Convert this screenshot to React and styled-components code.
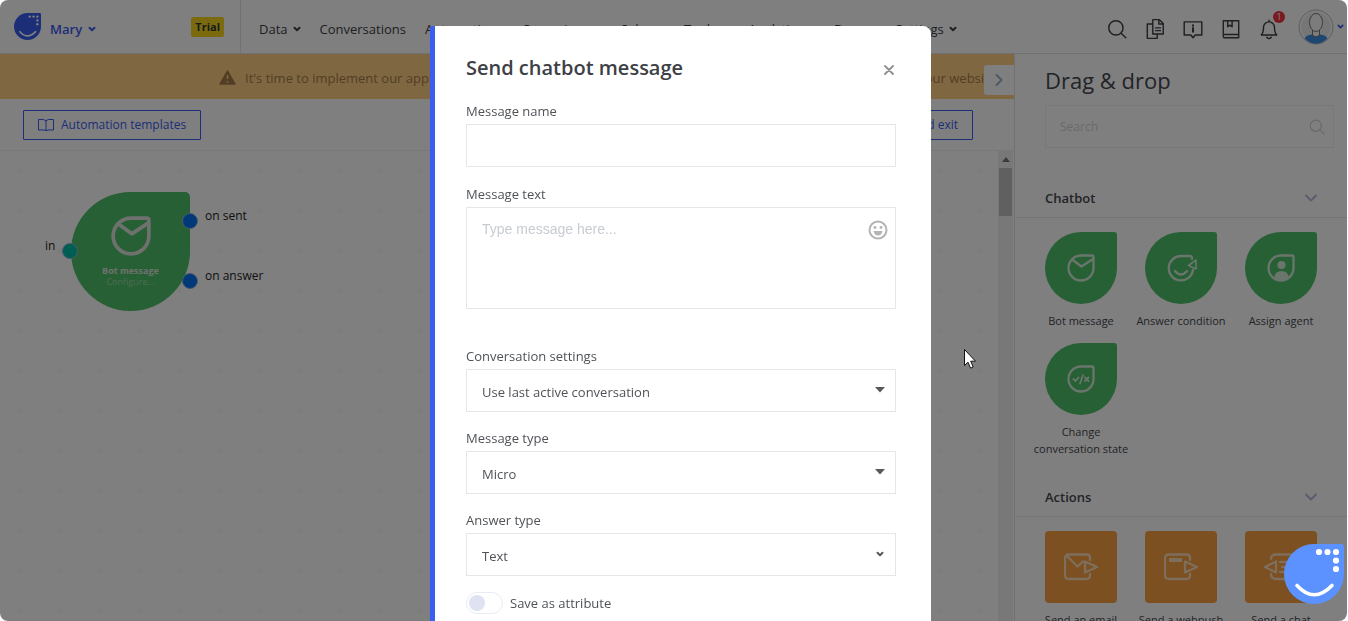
import React from "react";
import styled, { createGlobalStyle } from "styled-components";

const GlobalStyle = createGlobalStyle`
  *, *::before, *::after { box-sizing: border-box; }
  body { margin: 0; background: #fff; overflow: hidden; }
  body, button, input, select, textarea { font-family: "Open Sans", "Noto Sans", sans-serif; font-size: 13px; }
  button { cursor: pointer; }
  h1, h2, h3, p { margin: 0; }
`;

const Shell = styled.div`
  position: relative;
  display: flex;
  flex-direction: column;
  height: 100vh;
  margin-right: 1px;
  border-radius: 8px;
  overflow: hidden;
  background: #fff;
  color: #44484f;
`;

const TopBar = styled.header`
  display: flex;
  align-items: stretch;
  flex: none;
  height: 54px;
  border-bottom: 1px solid #dfe2ea;
  white-space: nowrap;
`;

const Brand = styled.div`
  display: flex;
  align-items: center;
  width: 241px;
  padding: 0 16px 0 14px;
  gap: 9px;
  border-right: 1px solid #dfe2ea;
`;

const Account = styled.button`
  display: flex;
  align-items: center;
  gap: 6px;
  margin-right: auto;
  padding: 4px 0 0;
  border: 0;
  background: none;
  color: #3a5cf0;
  font-size: 13px;
  font-weight: 600;
`;

const Trial = styled.span`
  padding: 0 4px;
  border-radius: 2px;
  background: #f7d51d;
  color: #33363c;
  font-size: 11px;
  line-height: 20px;
  font-weight: 700;
`;

const Nav = styled.nav`
  display: flex;
  align-items: center;
  flex: 1;
  min-width: 0;
  gap: 19px;
  padding: 4px 0 0 18px;
`;

const NavLink = styled.a`
  display: flex;
  align-items: center;
  gap: 5px;
  color: #3d4046;
  text-decoration: none;
`;

const Tools = styled.div`
  display: flex;
  align-items: center;
  gap: 16px;
  padding-top: 4px;
`;

const ToolButton = styled.button`
  position: relative;
  display: flex;
  padding: 0;
  border: 0;
  background: none;
  color: #3d4046;
`;

const Badge = styled.span`
  position: absolute;
  top: -7px;
  right: -5px;
  width: 12px;
  border-radius: 6px;
  background: #f23540;
  color: #fff;
  font-size: 9px;
  line-height: 12px;
  text-align: center;
`;

const Profile = styled.button`
  display: flex;
  align-items: center;
  gap: 3px;
  margin: 0 3px 0 18px;
  padding: 0;
  border: 0;
  background: none;
  color: #3a5cf0;
`;

const Body = styled.div`
  display: flex;
  flex: 1;
  min-height: 0;
`;

const Workspace = styled.main`
  position: relative;
  display: flex;
  flex-direction: column;
  flex: 1;
  min-width: 0;
`;

const Banner = styled.div`
  display: flex;
  align-items: center;
  justify-content: space-between;
  flex: none;
  height: 45px;
  padding: 2px 18px 0 219px;
  background: #ffcf85;
  color: #a57c48;
  white-space: nowrap;
`;

const BannerText = styled.span`
  display: flex;
  align-items: center;
  gap: 9px;
`;

const Collapse = styled.button`
  position: absolute;
  top: 11px;
  right: 0;
  display: grid;
  place-items: center;
  width: 30px;
  height: 30px;
  padding: 0;
  border: 0;
  border-radius: 3px 0 0 3px;
  background: #fff;
  color: #9db3c6;
`;

const Actions = styled.div`
  display: flex;
  align-items: center;
  justify-content: space-between;
  flex: none;
  height: 52px;
  padding: 0 41px 0 23px;
  border-bottom: 1px solid #f0f1f4;
`;

const OutlineButton = styled.button`
  display: flex;
  align-items: center;
  gap: 7px;
  height: 30px;
  padding: 0 14px;
  border: 1px solid #3a5cf0;
  border-radius: 1px;
  background: none;
  color: #3a5cf0;
  font-size: 12px;
`;

const Canvas = styled.div`
  position: relative;
  flex: 1;
  background-image: radial-gradient(circle, #f8f8f8 2px, transparent 3px);
  background-size: 40px 40px;
`;

const Scrollbar = styled.div`
  position: absolute;
  top: 0;
  bottom: 0;
  right: 1px;
  width: 15px;
  padding: 6px 1px;
  background: #f1f1f1;
  color: #777;
  text-align: center;
  line-height: 0;
`;

const Thumb = styled.div`
  height: 48px;
  margin-top: 6px;
  background: #c1c1c1;
`;

const Node = styled.div`
  position: absolute;
  left: 71px;
  top: 41px;
  display: flex;
  flex-direction: column;
  align-items: center;
  width: 119px;
  height: 119px;
  padding-top: 24px;
  border-radius: 60px 5px 60px 60px;
  background: #4cc068;
  color: #dfe3df;
  font-size: 9px;
  line-height: 11px;
`;

const NodeTitle = styled.strong`
  margin-top: 9px;
`;

const NodeHint = styled.span`
  color: #9cd8aa;
`;

const Port = styled.span`
  position: absolute;
  left: ${(p) => p.$x}px;
  top: ${(p) => p.$y}px;
  width: 16px;
  height: 16px;
  border: 1px solid #8fb4dc;
  border-radius: 50%;
  background: ${(p) => p.$color};
`;

const PortLabel = styled.span`
  position: absolute;
  left: ${(p) => p.$x}px;
  top: ${(p) => p.$y}px;
  color: #222;
  font-size: 12px;
  line-height: 16px;
  white-space: nowrap;
`;

const Sidebar = styled.aside`
  flex: none;
  width: 333px;
  border-left: 1px solid #dfe2ea;
  overflow: hidden;
`;

const SidebarTitle = styled.h2`
  padding: 10px 30px 0;
  font-size: 22px;
  line-height: 32px;
  font-weight: 400;
  color: #44484f;
`;

const SearchBox = styled.label`
  display: flex;
  align-items: center;
  height: 43px;
  margin: 9px 13px 0 30px;
  padding: 0 8px 0 14px;
  border: 1px solid #eef0f5;
  color: #cdd1d8;
`;

const SearchInput = styled.input`
  flex: 1;
  min-width: 0;
  padding: 0;
  border: 0;
  background: none;
  outline: 0;
  font-size: 12px;
  &::placeholder { color: #d2d5da; opacity: 1; }
`;

const SectionHead = styled.button`
  display: flex;
  align-items: center;
  justify-content: space-between;
  width: 100%;
  height: 40px;
  margin-top: ${(p) => p.$gap}px;
  padding: 0 29px 0 30px;
  border: 0;
  border-bottom: 1px solid #e6e9f3;
  background: none;
  color: #44484f;
  font-weight: 600;
  & svg { color: #b4bbdc; }
`;

const TileGrid = styled.div`
  display: grid;
  grid-template-columns: repeat(3, 100px);
  row-gap: 14px;
  padding: 14px 16px 0;
`;

const Tile = styled.div`
  display: flex;
  flex-direction: column;
  align-items: center;
  gap: 8px;
  font-size: 11px;
  line-height: 17px;
  text-align: center;
  white-space: pre-line;
`;

const TileShape = styled.div`
  display: grid;
  place-items: center;
  width: 72px;
  height: 72px;
  border-radius: ${(p) => (p.$square ? "4px" : "36px 3px 36px 36px")};
  background: ${(p) => (p.$square ? "#f8a040" : "#4cc068")};
  color: ${(p) => (p.$square ? "#fcdcb8" : "#d5ead9")};
`;

const Backdrop = styled.div`
  position: fixed;
  inset: 0 1px 0 0;
  display: flex;
  justify-content: center;
  align-items: flex-start;
  padding: 26px 0 0 14px;
  border-radius: 8px;
  background: rgba(0, 0, 0, 0.5);
  overflow: hidden;
`;

const Modal = styled.form`
  display: flex;
  flex-direction: column;
  width: 501px;
  min-height: 100vh;
  padding: 26px 35px 40px 31px;
  border-left: 5px solid #3a5ff0;
  border-radius: 3px 8px 0 0;
  background: #fff;
  color: #4f5358;
`;

const ModalHead = styled.div`
  display: flex;
  align-items: center;
  justify-content: space-between;
  margin-bottom: 17px;
`;

const ModalTitle = styled.h1`
  font-size: 20px;
  line-height: 32px;
  font-weight: 600;
  color: #3d4046;
`;

const Close = styled.button`
  display: flex;
  padding: 4px 2px 0;
  border: 0;
  background: none;
  color: #8f8f8f;
`;

const Field = styled.div`
  display: flex;
  flex-direction: column;
  gap: 3px;
  margin-bottom: ${(p) => p.$gap}px;
`;

const Label = styled.label`
  line-height: 20px;
`;

const Control = styled.div`
  position: relative;
  display: flex;
`;

const TextInput = styled.input`
  width: 100%;
  height: 43px;
  padding: 0 15px;
  border: 1px solid #e4e6e8;
  background: #fff;
`;

const TextArea = styled.textarea`
  width: 100%;
  height: 102px;
  padding: 11px 48px 11px 15px;
  border: 1px solid #e4e6e8;
  resize: none;
  font-family: "Liberation Sans", sans-serif;
  font-size: 14px;
  line-height: 20px;
  &::placeholder { color: #c6ccd2; opacity: 1; }
`;

const EmojiButton = styled.button`
  position: absolute;
  top: 13px;
  right: 8px;
  display: flex;
  padding: 0;
  border: 0;
  background: none;
  color: #b4b4b4;
`;

const Select = styled.select`
  width: 100%;
  height: 43px;
  padding: 2px 15px 0;
  border: 1px solid #e4e6e8;
  border-radius: 0;
  background: #fff;
  color: #4f5358;
  appearance: none;
`;

const SelectArrow = styled.span`
  position: absolute;
  top: 0;
  right: 11px;
  display: grid;
  place-items: center;
  width: 11px;
  height: 41px;
  color: #55595e;
  pointer-events: none;
`;

const SwitchRow = styled.label`
  display: flex;
  align-items: center;
  gap: 7px;
`;

const Switch = styled.input`
  appearance: none;
  display: flex;
  align-items: center;
  width: 37px;
  height: 22px;
  margin: 0;
  padding: 0 2px;
  border: 1px solid #e8ebf5;
  border-radius: 11px;
  &::before {
    content: "";
    width: 16px;
    height: 16px;
    border-radius: 50%;
    background: #dfe3f1;
  }
  &:checked { justify-content: flex-end; }
`;

const ChatButton = styled.button`
  position: fixed;
  right: 4px;
  bottom: 17px;
  display: flex;
  padding: 0;
  border: 0;
  background: none;
`;

const Pointer = styled.svg`
  position: fixed;
  left: 963px;
  top: 348px;
`;

const Icon = ({ size = 20, box = 20, width = 1.3, children, ...rest }) => (
  <svg width={size} height={size} viewBox={`0 0 ${box} ${box}`} fill="none" stroke="currentColor" strokeWidth={width} strokeLinecap="round" strokeLinejoin="round" aria-hidden="true" {...rest}>
    {children}
  </svg>
);

const Chevron = ({ size = 8, width = 2 }) => (
  <Icon size={size} box={8} width={width}><path d="M1.500 2.800 4 5.300 6.500 2.800" /></Icon>
);

const SectionChevron = () => (
  <Icon size={14} box={14} width={2}><path d="M2 4.500 7 9.500 12 4.500" /></Icon>
);

const Logo = ({ size, color, dot = 3.1 }) => (
  <svg width={size} height={size} viewBox="0 0 60 60" aria-hidden="true">
    <path d="M30 0H57Q60 0 60 3V30A30 30 0 1 1 30 0Z" fill={color} />
    <path d="M13 41.5Q30 60 48 41.5" fill="none" stroke="#fff" strokeWidth="3.6" strokeLinecap="round" />
    {[[35, 8], [43.5, 8], [52, 8], [52, 16.5], [52, 25]].map(([x, y]) => (
      <circle key={`${x}-${y}`} cx={x} cy={y} r={dot} fill="#fff" />
    ))}
  </svg>
);

const drop = "M14 1.5H25Q26.5 1.5 26.5 3V14A12.5 12.5 0 1 1 14 1.5Z";

const glyphs = {
  mail: <><path d={drop} /><path d="M5 5.5 14.5 12.500 26 5" /></>,
  answer: <><path d="M26 6V5Q26 3 24 3H15A12.2 12.2 0 1 0 27 17" /><path d="M9 18Q15 25 21 18" /><path d="M22.500 12.500 30 7V16Z" strokeWidth="1.600" /></>,
  agent: <><path d={drop} /><circle cx="14.500" cy="11" r="4" fill="currentColor" stroke="none" /><path d="M7 24Q8 17 14.500 17T22 24Q14 28 7 24Z" fill="currentColor" stroke="none" /></>,
  state: <><path d={drop} /><path d="M6.500 14 8.500 16 11.500 12.500M16 10 13 18.500M18 12.500 21.500 16M21.500 12.500 18 16" strokeWidth="1.800" /></>,
  email: <><path d="M26 7V5Q26 1.500 22.500 1.500H5Q1 1.500 1 5.500V22Q1 26 5 26H22Q26 26 26 22.500V21" /><path d="M3 3 13.500 13.500 19 8.500M21 8.500V19.500L33 14Z" /></>,
  webpush: <><path d="M26 7V5Q26 1.500 22.500 1.500H5Q1 1.500 1 5.500V22Q1 26 5 26H22Q26 26 26 22.500V21" /><path d="M5 7H18" strokeWidth="4" strokeLinecap="butt" /><path d="M21 8.500V19.500L33 14Z" /></>,
  chat: <><path d="M7 6Q7 1.500 12 1.500H27M7 21Q7 26 12 26H27" /><path d="M12 8.500V19.500L1 14ZM16 9H27M18 14H27M16 19H27" /></>,
};

const chatbotTiles = [
  ["mail", "Bot message"],
  ["answer", "Answer condition"],
  ["agent", "Assign agent"],
  ["state", "Change\nconversation state"],
];
const actionTiles = [["email", "Send an email"], ["webpush", "Send a webpush"], ["chat", "Send a chat"]];

const navItems = [
  ["Data", true],
  ["Conversations"],
  ["Automations"],
  ["Campaigns", true],
  ["Sales", true],
  ["Tools", true],
  ["Analytics", true],
  ["Docs", true],
  ["Settings", true],
];

const Tiles = ({ items, square }) => (
  <TileGrid>
    {items.map(([icon, name]) => (
      <Tile key={name}>
        <TileShape $square={square}>
          {square
            ? <svg width="34" height="28" viewBox="0 0 34 28" fill="none" stroke="currentColor" strokeWidth="2.3" strokeLinejoin="round" strokeLinecap="round">{glyphs[icon]}</svg>
            : <Icon size={icon === "answer" ? 31 : 28} box={icon === "answer" ? 31 : 28} width={2.3}>{glyphs[icon]}</Icon>}
        </TileShape>
        {name}
      </Tile>
    ))}
  </TileGrid>
);

const triangle = <svg width="10" height="6" viewBox="0 0 10 6"><path d="M0 0H10L5 5.500Z" fill="currentColor" /></svg>;

const SelectField = ({ id, label, value, arrow }) => (
  <Field $gap={16}>
    <Label htmlFor={id}>{label}</Label>
    <Control>
      <Select id={id} defaultValue={value}><option>{value}</option></Select>
      <SelectArrow>{arrow}</SelectArrow>
    </Control>
  </Field>
);

export default function App() {
  return (
    <Shell>
      <GlobalStyle />
      <TopBar>
        <Brand>
          <Logo size={27} color="#3a5cf0" dot={2.6} />
          <Account type="button">Mary <Chevron /></Account>
          <Trial>Trial</Trial>
        </Brand>
        <Nav>
          {navItems.map(([name, menu]) => (
            <NavLink key={name} href="#">{name}{menu && <Chevron />}</NavLink>
          ))}
        </Nav>
        <Tools>
          <ToolButton type="button" aria-label="Search">
            <Icon size={22}><circle cx="9" cy="9" r="6.500" /><path d="M14 14 18 18" /></Icon>
          </ToolButton>
          <ToolButton type="button" aria-label="Files">
            <Icon size={22}><path d="M8 1.500H14L17.500 5V14.500H8ZM13.500 1.500V5.500H17.500M8 5.500H3V18.500H12V14.500M10.500 9H15M10.500 11.500H15" /></Icon>
          </ToolButton>
          <ToolButton type="button" aria-label="Updates">
            <Icon size={22}><path d="M2 3.500H18V15.500H12L10 18 8 15.500H2Z" /><path d="M10 9V12.500M10 6.500V7" strokeWidth="1.800" /></Icon>
          </ToolButton>
          <ToolButton type="button" aria-label="Knowledge base">
            <Icon size={22}><path d="M3 2.500H17V18H4.500Q3 18 3 16.500ZM3 15H17M7 2.500V8L9 6.500 11 8V2.500" /></Icon>
          </ToolButton>
          <ToolButton type="button" aria-label="Notifications">
            <Icon size={22}><path d="M3 15.500Q5 13.500 5 8.500A5 5 0 0 1 15 8.500Q15 13.500 17 15.500ZM8 17.500Q10 20 12 17.500M10 3.500V2" /></Icon>
            <Badge>1</Badge>
          </ToolButton>
        </Tools>
        <Profile type="button" aria-label="Profile">
          <svg width="36" height="36" viewBox="0 0 36 36">
            <circle cx="18" cy="18" r="17" fill="#fbfbfb" stroke="#b9bcc2" />
            <circle cx="18" cy="18" r="14.500" fill="#ededed" />
            <path d="M6.500 29.500Q8 26 14 25.500H22Q28 26 29.500 29.500Q18 40 6.500 29.500Z" fill="#3d8ee0" />
            <path d="M14.500 21V26Q18 29.500 21.500 26V21" fill="#f8f8f8" stroke="#777" />
            <ellipse cx="18" cy="13.500" rx="6.500" ry="9" fill="#f8f8f8" stroke="#777" />
          </svg>
          <Chevron size={7} />
        </Profile>
      </TopBar>

      <Body>
        <Workspace>
          <Banner>
            <BannerText>
              <svg width="17" height="15" viewBox="0 0 17 15"><path d="M8.500 1 16 14H1Z" fill="currentColor" stroke="currentColor" strokeLinejoin="round" strokeWidth="1.500" /><path d="M8.500 5V9M8.500 11V12.500" stroke="#ffcf85" strokeWidth="1.600" /></svg>
              It's time to implement our application
            </BannerText>
            <span>your website</span>
          </Banner>
          <Collapse type="button" aria-label="Collapse panel">
            <Icon size={12} box={12} width={2}><path d="M3.500 1 8.500 6 3.500 11" /></Icon>
          </Collapse>
          <Actions>
            <OutlineButton type="button">
              <Icon size={16} box={16} width={1}><path d="M8 3.500Q6 2 .5 2.500V13Q6 12.500 8 13.500 10 12.500 15.500 13V2.500Q10 2 8 3.500V13.500" /></Icon>
              Automation templates
            </OutlineButton>
            <OutlineButton type="button">Save and exit</OutlineButton>
          </Actions>
          <Canvas>
            <Node>
              <Icon size={40} box={28} width={2.600}>{glyphs.mail}</Icon>
              <NodeTitle>Bot message</NodeTitle>
              <NodeHint>Configure...</NodeHint>
            </Node>
            <Port $x={62} $y={92} $color="#00bfa5" />
            <Port $x={182} $y={62} $color="#0070f0" />
            <Port $x={182} $y={122} $color="#0070f0" />
            <PortLabel $x={45} $y={87}>in</PortLabel>
            <PortLabel $x={205} $y={57}>on sent</PortLabel>
            <PortLabel $x={205} $y={117}>on answer</PortLabel>
            <Scrollbar>
              <svg width="8" height="5" viewBox="0 0 8 5"><path d="M0 5 4 0 8 5Z" fill="currentColor" /></svg>
              <Thumb />
            </Scrollbar>
          </Canvas>
        </Workspace>
        <Sidebar>
          <SidebarTitle>Drag &amp; drop</SidebarTitle>
          <SearchBox>
            <SearchInput type="search" placeholder="Search" aria-label="Search elements" />
            <Icon size={16} width={1.5}><circle cx="8.500" cy="8.500" r="7" /><path d="M14 14 19 19" /></Icon>
          </SearchBox>
          <SectionHead type="button" $gap={30}>Chatbot <SectionChevron /></SectionHead>
          <Tiles items={chatbotTiles} />
          <SectionHead type="button" $gap={20}>Actions <SectionChevron /></SectionHead>
          <Tiles items={actionTiles} square />
        </Sidebar>
      </Body>

      <Backdrop>
        <Modal>
          <ModalHead>
            <ModalTitle>Send chatbot message</ModalTitle>
            <Close type="button" aria-label="Close">
              <Icon size={10} box={10} width={1.800}><path d="M1 1 9 9M9 1 1 9" /></Icon>
            </Close>
          </ModalHead>
          <Field $gap={17}>
            <Label htmlFor="name">Message name</Label>
            <TextInput id="name" type="text" />
          </Field>
          <Field $gap={37}>
            <Label htmlFor="text">Message text</Label>
            <Control>
              <TextArea id="text" placeholder="Type message here..." />
              <EmojiButton type="button" aria-label="Insert emoji">
                <Icon size={20} width={2}><circle cx="10" cy="10" r="8.500" /><g fill="currentColor" stroke="none"><circle cx="7" cy="7.500" r="1.400" /><circle cx="13" cy="7.500" r="1.400" /><path d="M5.500 11H14.500Q13.500 15.500 10 15.500T5.500 11Z" /></g></Icon>
              </EmojiButton>
            </Control>
          </Field>
          <SelectField id="conversation" label="Conversation settings" value="Use last active conversation" arrow={triangle} />
          <SelectField id="type" label="Message type" value="Micro" arrow={triangle} />
          <SelectField id="answer" label="Answer type" value="Text" arrow={<Chevron />} />
          <SwitchRow>
            <Switch type="checkbox" role="switch" />
            Save as attribute
          </SwitchRow>
        </Modal>
      </Backdrop>

      <ChatButton type="button" aria-label="Open chat">
        <Logo size={60} color="#5b92ff" />
      </ChatButton>
      <Pointer width="14" height="22" viewBox="0 0 14 22" aria-hidden="true">
        <path d="M1.500 1.500V17.500L5 14.200 7.600 20.200 10.200 19 7.700 13.200H12.500Z" fill="#fff" stroke="#111" />
      </Pointer>
    </Shell>
  );
}
